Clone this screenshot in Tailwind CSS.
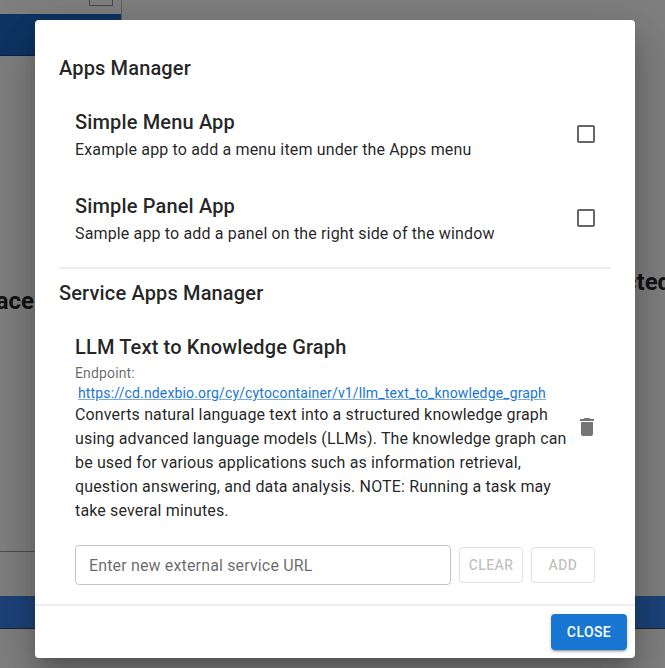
<!DOCTYPE html>
<html lang="en">
<head>
<meta charset="utf-8">
<title>Apps Manager</title>
<script src="https://cdn.jsdelivr.net/npm/@tailwindcss/browser@4"></script>
</head>
<body class="relative h-[668px] w-[665px] overflow-hidden bg-white font-[Roboto,sans-serif] text-black/87">
  <!-- Page behind the dialog -->
  <div class="flex h-[668px] flex-col">
    <div class="flex h-[596px]">
      <div class="flex w-[122px] flex-col border-r border-[#bdbdbd]">
        <div class="flex h-[14px] justify-end pr-[8px]"><div class="h-[6px] w-[24px] border border-t-0 border-[#909090]"></div></div>
        <div class="h-[42px] border-b border-[#124a90] bg-[#1c68c6]"></div>
        <div class="flex h-[496px] items-center border-b border-[#999]"><span class="w-[34px] pb-[5px] text-right text-2xl font-bold whitespace-nowrap [direction:rtl]">Workspace</span></div>
      </div>
      <div class="flex grow justify-end pt-[266px]"><span class="w-[41px] text-2xl font-bold">cted</span></div>
    </div>
    <div class="h-[33px] border-b border-[#3a4a68] bg-[#3a86f4]"></div>
  </div>

  <!-- Backdrop and dialog -->
  <div class="absolute inset-0 flex bg-black/50 pt-[20px] pl-[35px]">
    <div class="flex h-[638px] w-[600px] shrink-0 flex-col rounded bg-white shadow-[0px_11px_15px_-7px_rgba(0,0,0,0.2),0px_24px_38px_3px_rgba(0,0,0,0.14),0px_9px_46px_8px_rgba(0,0,0,0.12)]">
      <div class="flex h-[584px] flex-col px-[24px] pt-[32px]">
        <h2 class="text-[20px] leading-[32px] font-medium tracking-[0.0075em]">Apps Manager</h2>
        <div class="mt-[22px] flex items-center justify-between pr-[13px] pl-[16px]">
          <div>
            <h3 class="text-[20px] leading-[32px] font-medium tracking-[0.0075em]">Simple Menu App</h3>
            <p class="text-[16px] leading-[24px] tracking-[0.00938em]">Example app to add a menu item under the Apps menu</p>
          </div>
          <svg class="h-6 w-6 fill-black/60" viewBox="0 0 24 24"><path d="M19 5v14H5V5h14m0-2H5c-1.1 0-2 .9-2 2v14c0 1.100.9 2 2 2h14c1.100 0 2-.9 2-2V5c0-1.100-.9-2-2-2z"/></svg>
        </div>
        <div class="mt-[28px] flex items-center justify-between pr-[13px] pl-[16px]">
          <div>
            <h3 class="text-[20px] leading-[32px] font-medium tracking-[0.0075em]">Simple Panel App</h3>
            <p class="text-[16px] leading-[24px] tracking-[0.00938em]">Sample app to add a panel on the right side of the window</p>
          </div>
          <svg class="h-6 w-6 fill-black/60" viewBox="0 0 24 24"><path d="M19 5v14H5V5h14m0-2H5c-1.1 0-2 .9-2 2v14c0 1.100.9 2 2 2h14c1.100 0 2-.9 2-2V5c0-1.100-.9-2-2-2z"/></svg>
        </div>
        <div class="mt-[21px] h-[2px] shrink-0 bg-[#eee]"></div>
        <h2 class="mt-[8px] text-[20px] leading-[32px] font-medium tracking-[0.0075em]">Service Apps Manager</h2>
        <div class="mt-[22px] flex items-center justify-between pr-[12px] pl-[16px]">
          <div class="w-[496px]">
            <h3 class="text-[20px] leading-[32px] font-medium tracking-[0.0075em]">LLM Text to Knowledge Graph</h3>
            <p class="text-[14px] leading-[20px] tracking-[0.01071em] text-black/60">Endpoint:</p>
            <p class="pl-[3px] text-[14px] leading-[20px] tracking-[0.01071em] whitespace-nowrap text-[#1976d2]"><a class="underline decoration-[#1976d2]/60">https://cd.ndexbio.org/cy/cytocontainer/v1/llm_text_to_knowledge_graph</a></p>
            <p class="text-[16px] leading-[24px] tracking-[0.00938em]">Converts natural language text into a structured knowledge graph<br>using advanced language models (LLMs). The knowledge graph can<br>be used for various applications such as information retrieval,<br>question answering, and data analysis. NOTE: Running a task may<br>take several minutes.</p>
          </div>
          <svg class="h-6 w-6 fill-black/54" viewBox="0 0 24 24"><path d="M6 19c0 1.100.9 2 2 2h8c1.100 0 2-.9 2-2V7H6v12zM19 4h-3.500l-1-1h-5l-1 1H5v2h14V4z"/></svg>
        </div>
        <div class="mt-[22px] flex items-center gap-[8px] pl-[16px]">
          <div class="flex h-[40px] w-[376px] items-center rounded border border-black/23 px-[13px] pt-[2px] text-[16px] tracking-[0.00938em] text-black/60">Enter new external service URL</div>
          <button class="h-[36px] w-[64px] rounded border border-black/12 text-[14px] font-medium tracking-[0.02857em] text-black/26">CLEAR</button>
          <button class="h-[36px] w-[64px] rounded border border-black/12 text-[14px] font-medium tracking-[0.02857em] text-black/26">ADD</button>
        </div>
      </div>
      <div class="flex h-[54px] justify-end border-t-2 border-[#eee] pt-[8px] pr-[8px]">
        <button class="h-[36px] w-[76px] rounded bg-[#1976d2] text-[14px] font-medium tracking-[0.02857em] text-white shadow-[0px_3px_1px_-2px_rgba(0,0,0,0.2),0px_2px_2px_0px_rgba(0,0,0,0.14),0px_1px_5px_0px_rgba(0,0,0,0.12)]">CLOSE</button>
      </div>
    </div>
  </div>
</body>
</html>
